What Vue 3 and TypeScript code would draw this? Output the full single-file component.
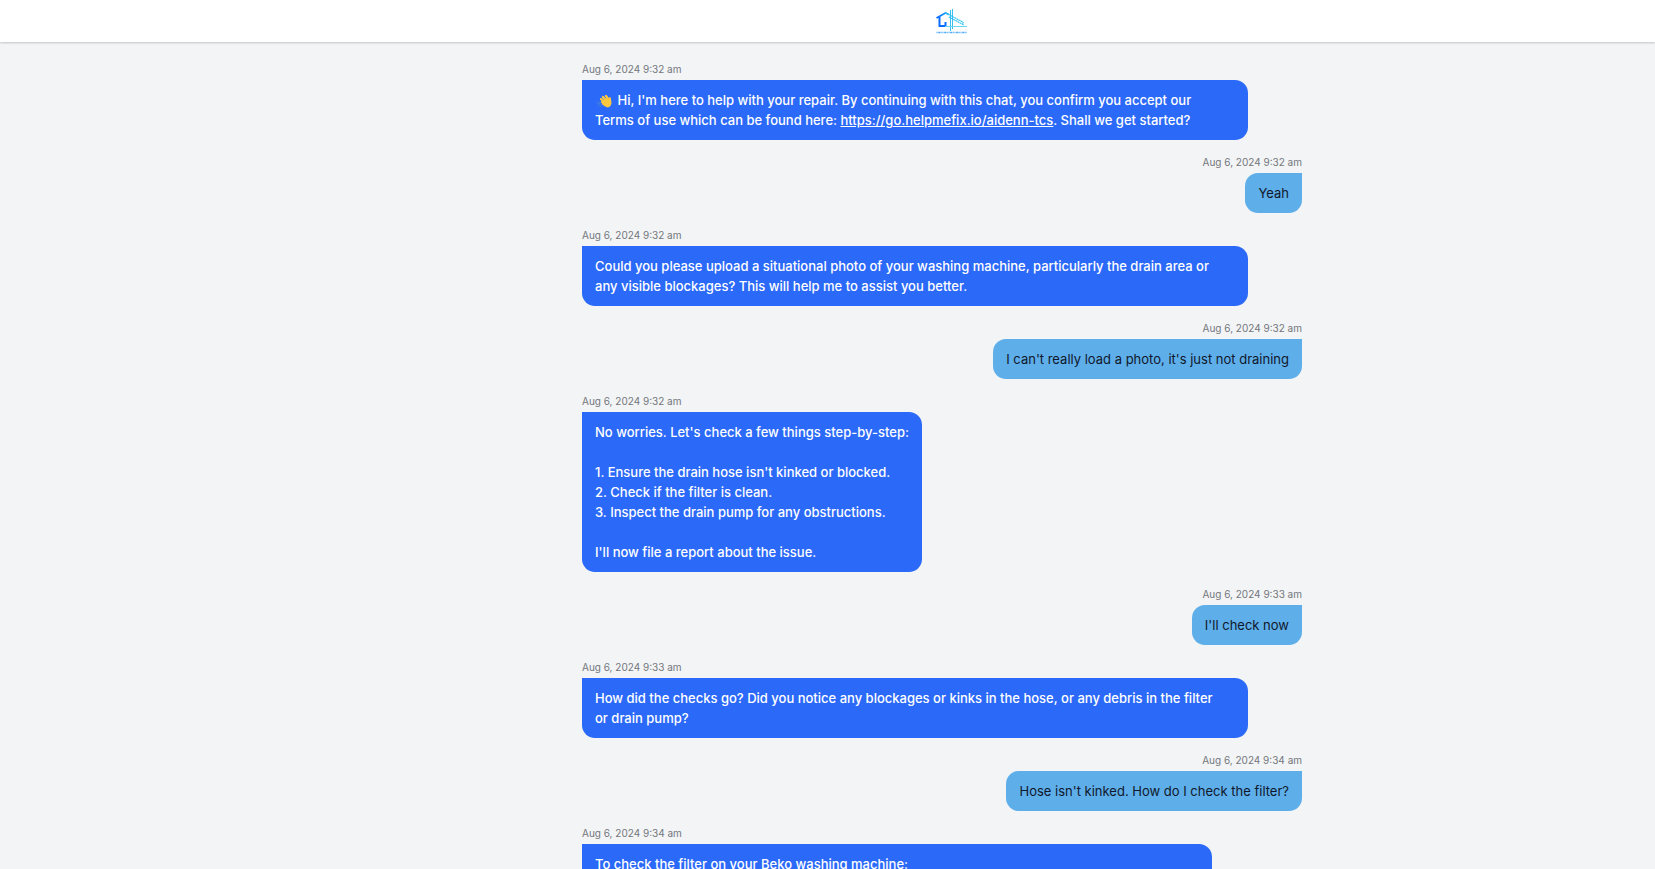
<script setup lang="ts">
interface Message {
  from: 'bot' | 'user'
  time: string
  text: string
  wave?: boolean
  link?: string
  after?: string
  size?: 'full' | 'wide'
}

const messages: Message[] = [
  {
    from: 'bot',
    time: 'Aug 6, 2024 9:32 am',
    wave: true,
    size: 'full',
    text: " Hi, I'm here to help with your repair. By continuing with this chat, you confirm you accept our\nTerms of use which can be found here: ",
    link: 'https://go.helpmefix.io/aidenn-tcs',
    after: '. Shall we get started?',
  },
  { from: 'user', time: 'Aug 6, 2024 9:32 am', text: 'Yeah' },
  {
    from: 'bot',
    time: 'Aug 6, 2024 9:32 am',
    size: 'full',
    text: 'Could you please upload a situational photo of your washing machine, particularly the drain area or\nany visible blockages? This will help me to assist you better.',
  },
  { from: 'user', time: 'Aug 6, 2024 9:32 am', text: "I can't really load a photo, it's just not draining" },
  {
    from: 'bot',
    time: 'Aug 6, 2024 9:32 am',
    text: "No worries. Let's check a few things step-by-step:\n\n1. Ensure the drain hose isn't kinked or blocked.\n2. Check if the filter is clean.\n3. Inspect the drain pump for any obstructions.\n\nI'll now file a report about the issue.",
  },
  { from: 'user', time: 'Aug 6, 2024 9:33 am', text: "I'll check now" },
  {
    from: 'bot',
    time: 'Aug 6, 2024 9:33 am',
    size: 'full',
    text: 'How did the checks go? Did you notice any blockages or kinks in the hose, or any debris in the filter\nor drain pump?',
  },
  { from: 'user', time: 'Aug 6, 2024 9:34 am', text: "Hose isn't kinked. How do I check the filter?" },
  { from: 'bot', time: 'Aug 6, 2024 9:34 am', text: 'To check the filter on your Beko washing machine:', size: 'wide' },
]
</script>

<template>
  <div class="page">
    <header class="topbar">
      <svg class="logo" viewBox="0 0 32 26" aria-hidden="true">
        <defs>
          <linearGradient id="roof" x1="0" x2="1" y1="0" y2="0">
            <stop offset="0" stop-color="#0a63ff" />
            <stop offset="1" stop-color="#22b8f8" />
          </linearGradient>
        </defs>
        <path d="M.5 9 9.500 4 13 5.500" fill="none" stroke="url(#roof)" stroke-width="1.800" />
        <path d="M3.500 8V17H9.500V13" fill="none" stroke="#0b6cff" stroke-width="2" />
        <path d="M10 4 27.500 13.500M13 8 27 15.500V13.500" fill="none" stroke="#2cc0f2" stroke-width="1.100" stroke-dasharray="2 .4" />
        <path d="M14.500 1V22M16.500 0V20" fill="none" stroke="#25b8f0" stroke-width=".9" />
        <path d="M9 17.500H31" fill="none" stroke="#69d6f6" stroke-width="1" />
        <path d="M.5 23.500H31" fill="none" stroke="#4aa8f8" stroke-width="1.500" stroke-dasharray="1 .7 2 .5 1 .8" />
      </svg>
    </header>
    <main class="chat">
      <div class="thread">
        <article v-for="(m, i) in messages" :key="i" class="message" :class="m.from">
          <time class="stamp">{{ m.time }}</time>
          <p class="bubble" :class="m.size"><svg v-if="m.wave" class="wave" viewBox="0 0 18 16" role="img" aria-label="Waving hand">
              <path d="M6 6 9 9M8 4 11 8M11 3 14 7M7 9 9 11" stroke="#ffc83d" stroke-width="2.200" stroke-linecap="round" />
              <path d="M7 9 11 5 14 6 14.500 4Q16 3.500 16 6L16.500 10Q16 14 12.500 14.500 9.500 14 7 11Z" fill="#ffc83d" />
              <path d="M2.500 8.500Q2.500 12 6 14M4.500 9Q4.500 11 7 12.500" fill="none" stroke="#4c83d9" stroke-width="1" />
            </svg>{{ m.text }}<a v-if="m.link" :href="m.link">{{ m.link }}</a>{{ m.after }}</p>
        </article>
      </div>
    </main>
  </div>
</template>

<style>
body {
  margin: 0;
}
</style>

<style scoped>
.page {
  height: 100vh;
  display: flex;
  flex-direction: column;
  overflow: hidden;
  background: #f2f4f6;
  font-family: Inter, "Liberation Sans", sans-serif;
}
.topbar {
  flex: none;
  display: flex;
  justify-content: center;
  height: 42px;
  box-sizing: border-box;
  padding: 9px 0 0 248px;
  background: #fff;
  box-shadow: 0 1px 2px rgba(0, 0, 0, 0.2);
}
.logo {
  width: 32px;
  height: 26px;
}
.chat {
  flex: 1;
  min-height: 0;
  overflow: hidden;
  padding: 21px 19px 0 248px;
}
.thread {
  max-width: 720px;
  margin: 0 auto;
}
.message {
  display: flex;
  flex-direction: column;
  align-items: flex-start;
  margin-bottom: 16px;
}
.message.user {
  align-items: flex-end;
}
.stamp {
  margin-bottom: 4px;
  font-size: 10px;
  line-height: 13px;
  color: #74777c;
}
.bubble {
  box-sizing: border-box;
  max-width: 666px;
  margin: 0;
  padding: 10px 13px;
  border-radius: 0 13px 13px 13px;
  background: #2b69f8;
  color: #fff;
  font-size: 13px;
  font-weight: 500;
  line-height: 20px;
  white-space: pre-wrap;
}
.bubble.full {
  width: 100%;
}
.bubble.wide {
  width: 100%;
  max-width: 630px;
}
.user .bubble {
  border-radius: 13px 0 13px 13px;
  background: #5eaeea;
  color: #10182b;
  font-weight: 400;
}
.bubble a {
  color: inherit;
}
.wave {
  width: 18px;
  height: 16px;
  margin-right: 1px;
  vertical-align: -4px;
}
</style>
